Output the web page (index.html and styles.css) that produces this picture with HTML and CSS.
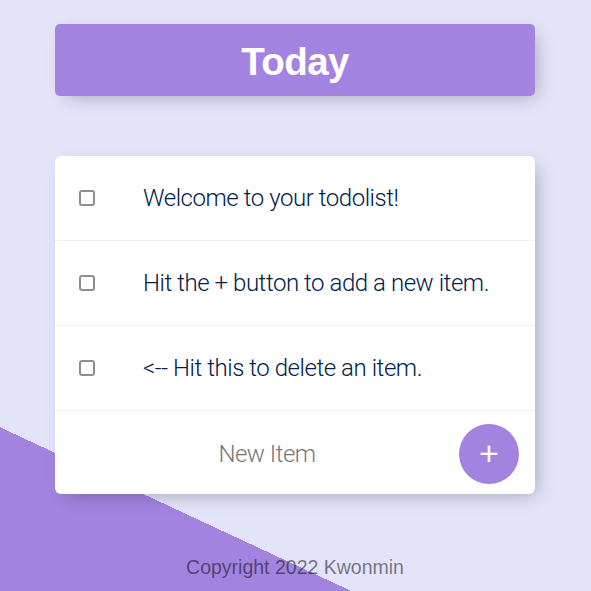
FILE: index.html
```html
<!DOCTYPE html>
<html lang="en">
<head>
<meta charset="utf-8">
<title>To Do List</title>
<link rel="stylesheet" href="styles.css">
</head>
<body>
  <main class="page">
    <div class="box heading">
      <h1>Today</h1>
    </div>
    <div class="box list">
      <div class="item">
        <input type="checkbox" class="check">
        <p>Welcome to your todolist!</p>
      </div>
      <div class="item">
        <input type="checkbox" class="check">
        <p>Hit the + button to add a new item.</p>
      </div>
      <div class="item">
        <input type="checkbox" class="check">
        <p>&lt;-- Hit this to delete an item.</p>
      </div>
      <form class="item new-form">
        <input type="text" class="new-input" placeholder="New Item" autocomplete="off">
        <button type="button" class="add-btn">+</button>
      </form>
    </div>
    <footer class="footer">Copyright 2022 Kwonmin</footer>
  </main>
</body>
</html>
```
FILE: styles.css
```css
html {
  background-color: #E4E6FB;
}
body {
  margin: 0;
  min-height: 100vh;
  background: linear-gradient(25deg, #A283E0 18.9%, #E3E4F9 18.9%);
  font-family: "Roboto", "Liberation Sans", sans-serif;
}
.page {
  width: 480px;
  margin: 0 0 0 55px;
  padding-top: 24px;
  display: flex;
  flex-direction: column;
}
.box {
  background: #fff;
  border-radius: 6px;
  box-shadow: 6px 6px 18px -6px rgba(0, 0, 0, 0.3);
}
.heading {
  background: #A284E0;
  height: 72px;
  display: flex;
  align-items: center;
  justify-content: center;
  border-radius: 5px;
}
.heading h1 {
  margin: 4px 0 0;
  color: #fff;
  font-family: "Liberation Sans", sans-serif;
  font-weight: 700;
  font-size: 38.5px;
  letter-spacing: -0.6px;
}
.list {
  margin-top: 60px;
  overflow: hidden;
}
.item {
  display: flex;
  align-items: center;
  min-height: 84px;
  border-bottom: 1px solid #F1F1F1;
}
.check {
  appearance: none;
  -webkit-appearance: none;
  flex: none;
  width: 16px;
  height: 16px;
  margin: 0 0 0 24px;
  border: 2px solid #8e8d95;
  border-radius: 3px;
  background: #fff;
  box-sizing: border-box;
}
.item p {
  margin: 0;
  padding: 0 0 0 48px;
  font-size: 24px;
  font-weight: 300;
  color: #00204a;
  letter-spacing: -0.45px;
}
.new-form {
  border-bottom: none;
  min-height: 83px;
  padding-left: 24px;
}
.new-input {
  width: 376px;
  height: 60px;
  border: none;
  outline: none;
  text-align: center;
  font-family: "Roboto", "Liberation Sans", sans-serif;
  font-size: 24px;
  font-weight: 300;
  letter-spacing: -0.5px;
  padding: 2px 0 0;
  margin: 0 4px 0 0;
  background: transparent;
}
.new-input::placeholder {
  color: #777777;
}
.add-btn {
  width: 60px;
  height: 60px;
  margin-top: 2px;
  border: none;
  border-radius: 50%;
  background: #A284E0;
  color: #fff;
  font-family: "Liberation Sans", sans-serif;
  font-size: 34px;
  line-height: 1;
  padding: 0 0 2px;
  display: flex;
  align-items: center;
  justify-content: center;
}
.footer {
  margin-top: 62px;
  text-align: center;
  font-family: "Liberation Sans", sans-serif;
  font-size: 19.5px;
  color: rgba(0, 0, 0, 0.5);
}
```
